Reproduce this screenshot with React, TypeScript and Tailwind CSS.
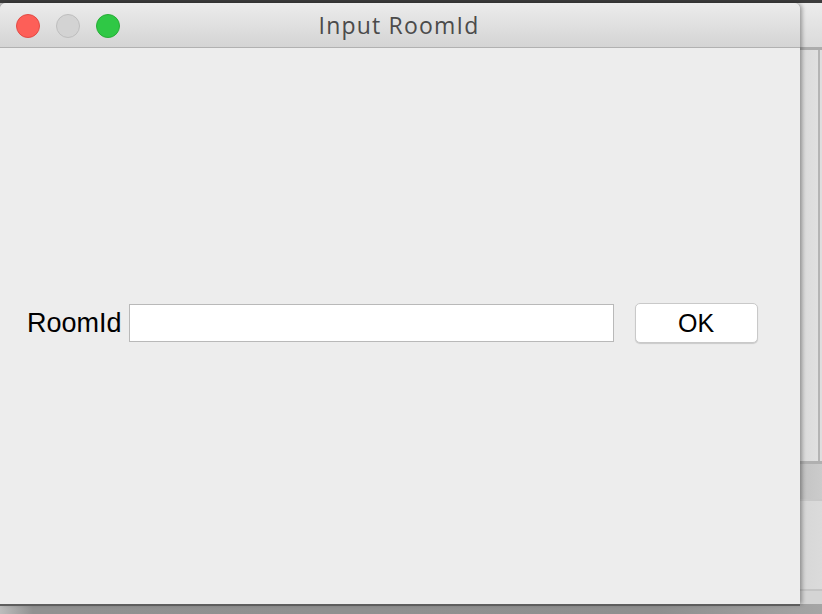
import React from "react";

function TrafficLight({ fill, ring }: { fill: string; ring: string }) {
  return <span className={`h-6 w-6 rounded-full border ${fill} ${ring}`} />;
}

export default function App() {
  return (
    <div className="relative h-[614px] w-[822px] overflow-hidden bg-[linear-gradient(90deg,#bdbdbd_0%,#919191_4%,#8f8f8f_80%,#a5a5a5_100%)] font-['Liberation_Sans',sans-serif]">
      {/* desktop strip at top */}
      <div className="absolute inset-x-0 top-0 h-[3px] bg-[#3c3c3c]" />

      {/* window behind, only its right edge shows */}
      <div className="absolute left-[760px] top-[3px] flex h-[601px] w-[80px] flex-col overflow-hidden rounded-t-[6px] bg-[#dedede]">
        <div className="h-[44px] bg-[linear-gradient(180deg,#ececec_0%,#dadada_100%)]" />
        <div className="h-[3px] bg-[#acacac]" />
        <div className="h-[411px] border-r-[2px] border-[#b4b4b4] mr-[20px] bg-[linear-gradient(90deg,#bdbdbd_0%,#d6d6d6_50%,#e0e0e0_100%)]" />
        <div className="h-[3px] bg-[#b0b0b0]" />
        <div className="h-[37px] border-b-[2px] border-[#c8c8c8] bg-[linear-gradient(90deg,#a9a9a9_0%,#c6c6c6_60%,#d2d2d2_100%)]" />
        <div className="h-[90px] border-b-[2px] border-[#c4c4c4] bg-[linear-gradient(90deg,#c4c4c4_0%,#d8d8d8_60%,#dedede_100%)]" />
        <div className="flex-1 bg-[#d4d4d4]" />
      </div>

      {/* front window */}
      <div className="absolute left-0 top-[3px] flex h-[601px] w-[800px] flex-col overflow-hidden rounded-t-[6px] bg-[#ededed] shadow-[0_2px_0_#5e5e5e,2px_0_4px_rgba(0,0,0,0.35)]">
        <div className="relative flex h-[45px] shrink-0 items-center border-b border-[#b1b1b1] bg-[linear-gradient(180deg,#ececec_0%,#d4d4d4_100%)]">
          <div className="absolute left-4 top-[11px] flex gap-4">
            <TrafficLight fill="bg-[#fd5f58]" ring="border-[#e24b45]" />
            <TrafficLight fill="bg-[#d3d3d3]" ring="border-[#bebebe]" />
            <TrafficLight fill="bg-[#2fc845]" ring="border-[#27ad36]" />
          </div>
          <div className="w-full pr-[2px] text-center font-['Open_Sans',sans-serif] text-[23px] leading-none tracking-[1.2px] text-[#4b4b4b]">
            Input RoomId
          </div>
        </div>

        <div className="flex flex-1 items-center pl-[27px] pb-[6px]">
          <span className="mr-[7px] text-[27px] leading-none text-black">RoomId</span>
          <div className="h-[38px] w-[485px] border border-[#b9b9b9] bg-white" />
          <button className="ml-[21px] h-[40px] w-[123px] rounded-[5px] border border-[#c9c9c9] bg-white text-[25px] leading-none text-black shadow-[0_1px_1px_rgba(0,0,0,0.15)]">
            OK
          </button>
        </div>
      </div>
    </div>
  );
}
